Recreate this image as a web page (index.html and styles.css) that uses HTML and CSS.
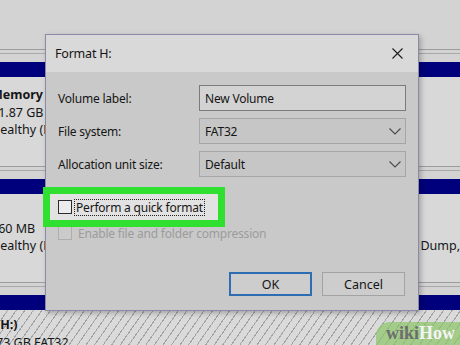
FILE: index.html
```html
<!DOCTYPE html>
<html lang="en">
<head>
    <meta charset="UTF-8">
    <meta name="viewport" content="width=device-width, initial-scale=1.0">
    <title>Format H:</title>
    <link rel="stylesheet" href="styles.css">
</head>
<body>
    <div class="disks">
        <div class="disk disk-g">
            <div class="rule"></div>
            <div class="bar"></div>
            <div class="parts">
                <div class="part part-left">
                    <b>Memory Card (G:)</b>
                    <span>31.87 GB FAT32</span>
                    <span>Healthy (Primary Partition)</span>
                </div>
            </div>
        </div>
        <div class="disk disk-c">
            <div class="rule"></div>
            <div class="bar"></div>
            <div class="parts">
                <div class="part part-left">
                    <span>&nbsp;</span>
                    <span>260 MB</span>
                    <span>Healthy (EFI System Partition)</span>
                </div>
                <div class="part part-right">
                    <b>Windows (C:)</b>
                    <span>237.2 GB NTFS</span>
                    <span>Healthy (Boot, Page File, Crash Dump, Primary Partition)</span>
                </div>
            </div>
        </div>
        <div class="disk disk-h">
            <div class="rule"></div>
            <div class="bar"></div>
            <div class="parts hatch">
                <div class="part part-h">
                    <b>(H:)</b>
                    <span>73 GB FAT32</span>
                </div>
            </div>
        </div>
    </div>

    <div class="dialog">
        <div class="titlebar">
            <span class="title">Format H:</span>
            <svg class="close" width="11" height="11" viewBox="0 0 11 11">
                <path d="M0.5 0.5 L10.5 10.5 M10.5 0.5 L0.5 10.5" stroke="#1b1b1b" stroke-width="1.1" fill="none"/>
            </svg>
        </div>
        <div class="dialog-body">
            <div class="field">
                <span class="label">Volume label:</span>
                <div class="textbox">New Volume</div>
            </div>
            <div class="field">
                <span class="label">File system:</span>
                <div class="combo">
                    <span>FAT32</span>
                    <svg class="chevron" width="12" height="7" viewBox="0 0 12 7">
                        <polyline points="0.5,0.5 6,6 11.5,0.5" stroke="#4a4a4a" stroke-width="1.1" fill="none"/>
                    </svg>
                </div>
            </div>
            <div class="field">
                <span class="label">Allocation unit size:</span>
                <div class="combo">
                    <span>Default</span>
                    <svg class="chevron" width="12" height="7" viewBox="0 0 12 7">
                        <polyline points="0.5,0.5 6,6 11.5,0.5" stroke="#4a4a4a" stroke-width="1.1" fill="none"/>
                    </svg>
                </div>
            </div>

            <div class="options">
                <div class="check-row quick">
                    <span class="box"></span>
                    <span class="check-label focus">Perform a quick format</span>
                </div>
                <div class="check-row disabled">
                    <span class="box"></span>
                    <span class="check-label">Enable file and folder compression</span>
                </div>
            </div>

            <div class="buttons">
                <button class="btn default">OK</button>
                <button class="btn">Cancel</button>
            </div>
        </div>
    </div>

    <div class="wikihow"><span class="wiki">wiki</span><span class="how">How</span></div>
</body>
</html>
```

FILE: styles.css
```css
* {
    box-sizing: border-box;
}
body {
    margin: 0;
    width: 460px;
    height: 345px;
    overflow: hidden;
    position: relative;
    background-color: #d3d3d3;
    font-family: "Noto Sans", sans-serif;
    font-size: 12.5px;
    color: #151515;
}

/* disk map behind the dialog */
.disks {
    padding-top: 49px;
}
.rule {
    height: 5px;
    border-top: 1px solid #9d9d9d;
    border-bottom: 1px solid #a9a9a9;
    margin-bottom: 8px;
}
.bar {
    height: 15px;
    background-color: #00007c;
}
.parts {
    display: grid;
    grid-template-columns: 236px 1fr;
    height: 89px;
    background-color: #d8d8d8;
}
.disk-c .parts {
    height: 88px;
}
.part {
    display: flex;
    flex-direction: column;
    padding-top: 9px;
    line-height: 17.5px;
    white-space: nowrap;
}
.disk-c .part {
    padding-top: 8px;
}
.part-left {
    margin-left: -9px;
}
.part-right {
    padding-left: 2px;
}
.parts.hatch {
    height: 40px;
    background: repeating-linear-gradient(125deg, #dadada 0 6px, #a2a2a2 6px 7px);
}
.part-h {
    padding-top: 6px;
    margin-left: -4px;
}

/* format dialog */
.dialog {
    position: absolute;
    left: 45px;
    top: 34px;
    width: 374px;
    height: 277px;
    border: 1px solid #8a8aa8;
    background-color: #c9c9c9;
    box-shadow: 2px 2px 5px rgba(0, 0, 0, 0.25);
    font-size: 12px;
    letter-spacing: -0.2px;
}
.titlebar {
    height: 37px;
    display: flex;
    align-items: center;
    justify-content: space-between;
    padding: 0 15px 0 9px;
    background-color: #d9d9d9;
}
.title {
    font-size: 12.5px;
}
.dialog-body {
    padding: 13px 12px 14px;
}
.field {
    display: grid;
    grid-template-columns: 141px 1fr;
    align-items: center;
    height: 26px;
    margin-bottom: 7px;
}
.field:last-of-type {
    margin-bottom: 0;
}
.textbox,
.combo {
    height: 26px;
    display: flex;
    align-items: center;
    padding-left: 5px;
}
.textbox {
    border: 1px solid #7b7b7b;
    background-color: #d3d3d3;
}
.combo {
    justify-content: space-between;
    padding-right: 4px;
    border: 1px solid #a6a6a6;
    background-color: #c6c6c6;
}

.options {
    margin-top: 17px;
}
.check-row {
    height: 26px;
    display: flex;
    align-items: center;
}
.box {
    width: 14px;
    height: 14px;
    border: 1px solid #2b2b2b;
    background-color: #ececec;
}
.check-label {
    margin-left: 4px;
}
.check-row.quick {
    position: relative;
    z-index: 1;
    width: 168px;
    margin-left: -8px;
    padding-left: 8px;
    background-color: #e2e2e2;
    outline: 7px solid #30e030;
}
.focus {
    margin-left: 2px;
    padding: 0 1px;
    line-height: 15px;
    border: 1px dotted #222;
}
.check-row.disabled .box {
    border-color: #adadad;
    background-color: #cbcbcb;
}
.check-row.disabled .check-label {
    margin-left: 6px;
    color: #9c9c9c;
}

.buttons {
    margin-top: 26px;
    display: flex;
    justify-content: flex-end;
    gap: 10px;
    padding-right: 1px;
}
.btn {
    width: 83px;
    height: 24px;
    font-family: "Noto Sans", sans-serif;
    font-size: 12.5px;
    color: #151515;
    border: 1px solid #a3a3a3;
    background-color: #cdcdcd;
    padding: 0;
}
.btn.default {
    border: 2px solid #2e6db3;
}

/* watermark */
.wikihow {
    position: absolute;
    right: 0;
    bottom: 0;
    height: 23px;
    padding: 0 5px 0 10px;
    border-top-left-radius: 14px;
    background-color: rgba(140, 196, 104, 0.7);
    font-family: "Liberation Serif", serif;
    font-weight: bold;
    font-size: 18px;
    line-height: 23px;
}
.wiki {
    color: #6d6d6d;
}
.how {
    color: #f4f4f4;
}
```
